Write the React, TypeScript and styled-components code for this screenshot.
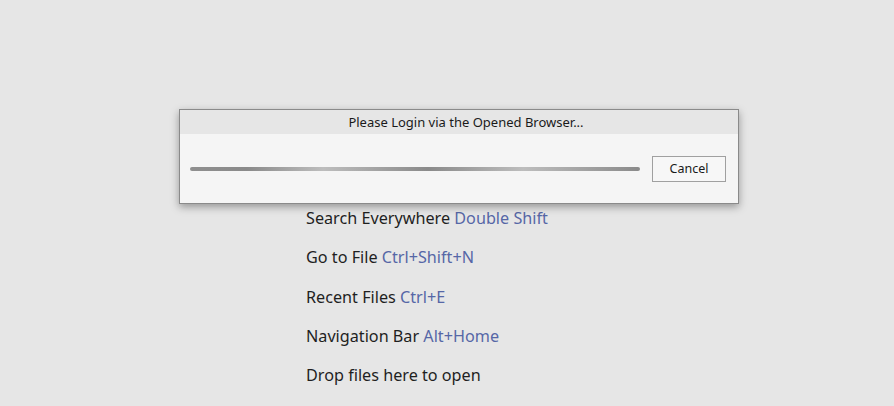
import React from "react";
import styled, { createGlobalStyle } from "styled-components";

const Global = createGlobalStyle`
  html, body { margin: 0; padding: 0; background: #e6e6e6; }
  body { font-family: "Noto Sans", "Open Sans", sans-serif; }
  #root { width: 894px; height: 406px; }
`;

const Page = styled.div`
  position: relative;
  width: 894px;
  height: 406px;
  background: #e6e6e6;
  overflow: hidden;
`;

const Hints = styled.ul`
  list-style: none;
  margin: 0;
  padding: 199px 0 0 306px;
  display: flex;
  flex-direction: column;
`;

const Hint = styled.li`
  height: 39.25px;
  line-height: 39.25px;
  font-size: 16.2px;
  color: #1f1f1f;
  white-space: nowrap;
`;

const Key = styled.span`
  color: #5667a6;
`;

const Dialog = styled.div`
  position: absolute;
  left: 179px;
  top: 109px;
  width: 558px;
  height: 93px;
  border: 1px solid #8a8a8a;
  background: #f5f5f5;
  box-shadow: 0 3px 8px rgba(0, 0, 0, 0.35);
  display: flex;
  flex-direction: column;
`;

const Title = styled.div`
  height: 24px;
  background: #e6e6e6;
  display: flex;
  align-items: center;
  justify-content: center;
  padding-left: 14px;
  font-size: 13px;
  color: #1a1a1a;
`;

const Body = styled.div`
  flex: 1;
  display: flex;
  align-items: center;
  padding: 0 12px 0 10px;
  gap: 12px;
`;

const Progress = styled.div`
  flex: 1;
  height: 4px;
  border-radius: 2px;
  background: linear-gradient(
    90deg,
    #8f8f8f 0px,
    #8a8a8a 57px,
    #bdbdbd 133px,
    #8a8a8a 238px,
    #bdbdbd 333px,
    #8a8a8a 450px
  );
`;

const Button = styled.button`
  width: 74px;
  height: 26px;
  border: 1px solid #a0a0a0;
  background: #f7f7f7;
  font-family: inherit;
  font-size: 12.5px;
  color: #1a1a1a;
  padding: 0;
`;

export default function App() {
  return (
    <Page>
      <Global />
      <Hints>
        <Hint>
          Search Everywhere <Key>Double Shift</Key>
        </Hint>
        <Hint>
          Go to File <Key>Ctrl+Shift+N</Key>
        </Hint>
        <Hint>
          Recent Files <Key>Ctrl+E</Key>
        </Hint>
        <Hint>
          Navigation Bar <Key>Alt+Home</Key>
        </Hint>
        <Hint>Drop files here to open</Hint>
      </Hints>
      <Dialog>
        <Title>Please Login via the Opened Browser...</Title>
        <Body>
          <Progress />
          <Button>Cancel</Button>
        </Body>
      </Dialog>
    </Page>
  );
}
